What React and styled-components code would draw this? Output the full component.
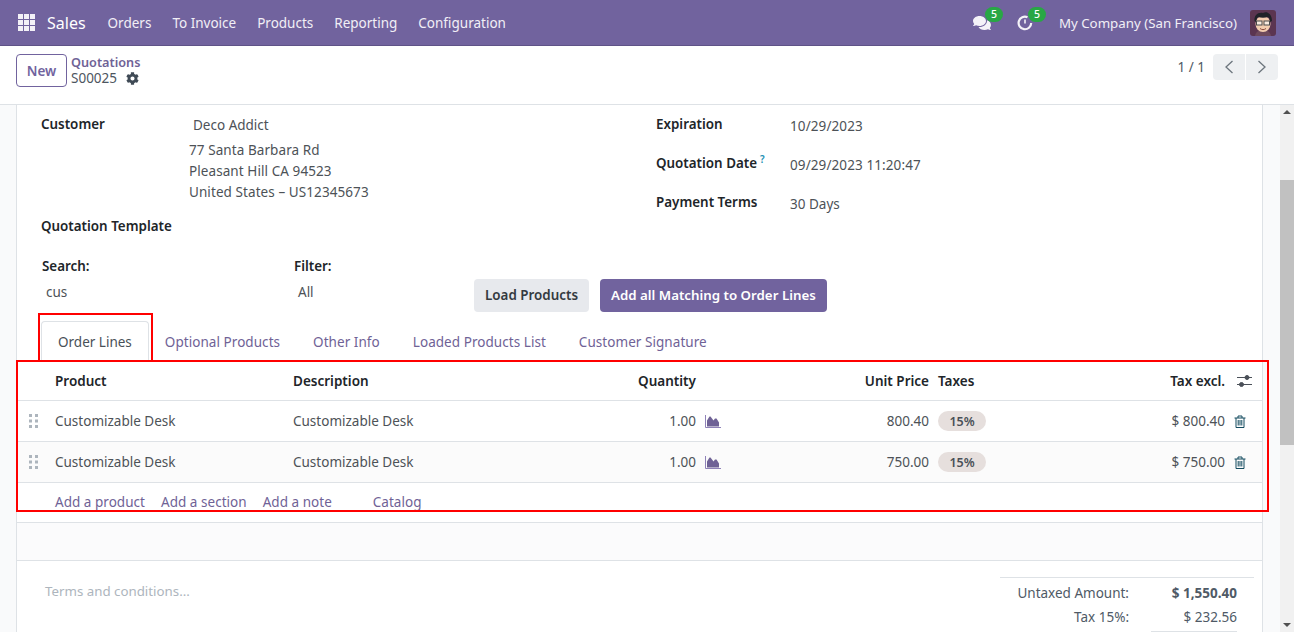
import React from "react";
import styled, { createGlobalStyle } from "styled-components";
import { FaCog, FaComments } from "react-icons/fa";

const GlobalStyle = createGlobalStyle`
html, body {
  margin: 0;
  height: 100%;
  overflow: hidden;
  font-family: "Noto Sans", "Open Sans", sans-serif;
  font-size: 13.5px;
  color: #4d5257;
  background: #fff;
}
* { box-sizing: border-box; }
`;

const purple = "#71639e";
const linkPurple = "#6f6296";
const line = "#dee2e6";
const columns = "30px 238px 283px 136px 26px 207px 110px 186px 29px";

const Shell = styled.div`
  display: flex;
  flex-direction: column;
  width: 1294px;
  height: 632px;
  overflow: hidden;
`;

const Navbar = styled.header`
  display: flex;
  align-items: center;
  flex: 0 0 46px;
  padding: 0 18px;
  background: ${purple};
  border-bottom: 1px solid #5f5387;
  color: #fff;
`;

const AppsGrid = styled.div`
  display: grid;
  grid-template-columns: repeat(3, 5px);
  grid-auto-rows: 5px;
  gap: 1px;
  margin-right: 12px;
  span { background: #f3f1f7; }
`;

const Brand = styled.span`
  font-size: 16px;
  margin-right: 22px;
`;

const Menu = styled.nav`
  display: flex;
  gap: 21px;
  color: #f1eff6;
`;

const NavRight = styled.div`
  display: flex;
  align-items: center;
  margin-left: auto;
`;

const Systray = styled.div`
  position: relative;
  width: 18px;
  height: 18px;
  margin-right: 25px;
  display: flex;
  align-items: center;
  justify-content: center;
  color: #f4f2f8;
`;

const Badge = styled.span`
  position: absolute;
  top: -7px;
  left: 12px;
  width: 18px;
  height: 15px;
  border-radius: 8px;
  background: #28a745;
  color: #fff;
  font-size: 10.5px;
  font-weight: 500;
  line-height: 15px;
  text-align: center;
`;

const Company = styled.span`
  margin-right: 13px;
  color: #f1eff6;
  font-size: 13.3px;
`;

const Avatar = styled.svg`
  width: 26px;
  height: 26px;
  border-radius: 3px;
  display: block;
`;

const ControlPanel = styled.div`
  display: flex;
  align-items: flex-start;
  flex: 0 0 59px;
  padding: 8px 16px 0;
  background: #fff;
  border-bottom: 1px solid ${line};
`;

const NewButton = styled.button`
  width: 51px;
  height: 33px;
  padding: 0;
  margin-right: 4px;
  background: #fff;
  border: 1px solid ${purple};
  border-radius: 4px;
  color: ${purple};
  font: 600 13.5px "Noto Sans", sans-serif;
`;

const Breadcrumb = styled.div`
  display: flex;
  flex-direction: column;
  line-height: 16px;
`;

const Crumb = styled.span`
  color: ${linkPurple};
  font-size: 12.7px;
  font-weight: 600;
`;

const Current = styled.span`
  display: flex;
  align-items: center;
  gap: 9px;
  color: #4d5560;
  font-size: 13.5px;
`;

const Pager = styled.div`
  display: flex;
  align-items: center;
  margin-left: auto;
  height: 26px;
`;

const PagerText = styled.span`
  margin-right: 7px;
  color: #4f5a66;
`;

const PagerButton = styled.span`
  display: flex;
  align-items: center;
  justify-content: center;
  width: 32px;
  height: 26px;
  margin-left: 1px;
  background: #eef0f2;
  border-radius: ${(p) => (p.$first ? "4px 0 0 4px" : "0 4px 4px 0")};
`;

const Body = styled.div`
  display: flex;
  flex: 1;
  min-height: 0;
  background: #f9fafb;
`;

const Gutter = styled.main`
  flex: 1;
  min-width: 0;
  overflow: hidden;
  padding: 0 17px 0 16px;
`;

const Sheet = styled.div`
  background: #fff;
  border-left: 1px solid ${line};
  border-right: 1px solid ${line};
  min-height: 100%;
`;

const FormTop = styled.div`
  display: grid;
  grid-template-columns: 615px 1fr;
  padding: 10px 0 0 24px;
`;

const FieldColumn = styled.div`
  display: flex;
  flex-direction: column;
`;

const Field = styled.div`
  display: grid;
  grid-template-columns: ${(p) => p.$label || "134px"} 1fr;
  margin-top: ${(p) => p.$above || "0"};
  margin-bottom: ${(p) => p.$gap || "0"};
`;

const Label = styled.span`
  color: #212529;
  font-weight: 600;
  line-height: 19px;
  font-size: 13.4px;
  sup {
    color: #1d8fb3;
    font-size: 10px;
    line-height: 0;
    margin-left: 3px;
  }
`;

const Value = styled.span`
  line-height: 21px;
  margin-top: ${(p) => p.$top || "0"};
  padding-left: ${(p) => p.$pad || "0"};
`;

const DateValue = styled(Value)`
  letter-spacing: 0.1px;
`;

const Address = styled.div`
  line-height: 21px;
  margin-top: 4px;
  letter-spacing: 0.08px;
`;

const FilterRow = styled.div`
  display: flex;
  align-items: flex-start;
  height: 64px;
  margin-top: 21px;
  padding-left: 25px;
`;

const FilterField = styled.div`
  display: flex;
  flex-direction: column;
  width: ${(p) => p.$w};
  gap: 7px;
`;

const FilterValue = styled.span`
  padding-left: 4px;
  line-height: 19px;
`;

const ActionButton = styled.button`
  height: 33px;
  margin: 22px 11px 0 0;
  padding: 0 11px 2px;
  border: 0;
  border-radius: 4px;
  background: ${(p) => (p.$primary ? purple : "#e7e9ed")};
  color: ${(p) => (p.$primary ? "#fff" : "#343a40")};
  font: 600 ${(p) => (p.$primary ? "13.3px" : "13.4px")} "Noto Sans", sans-serif;
`;

const Tabs = styled.div`
  display: flex;
  height: 40px;
  padding-left: 24px;
`;

const Tab = styled.span`
  position: relative;
  display: flex;
  align-items: center;
  padding: ${(p) => (p.$active ? "0 16px" : "0 16px 0 15px")};
  color: ${(p) => (p.$active ? "#495057" : linkPurple)};
  background: #fff;
  border: ${(p) => (p.$active ? `1px solid ${line}` : "1px solid transparent")};
  border-bottom: 0;
  border-radius: 4px 4px 0 0;
  letter-spacing: ${(p) => (p.$active ? "0" : "0.05px")};
`;

const Marker = styled.div`
  position: absolute;
  inset: ${(p) => p.$inset};
  border: 2px solid #f00;
  pointer-events: none;
  z-index: 1;
`;

const Table = styled.div`
  position: relative;
`;

const Row = styled.div`
  display: grid;
  grid-template-columns: ${columns};
  align-items: center;
  height: ${(p) => p.$h || "40px"};
  border-bottom: 1px solid ${line};
  background: ${(p) => (p.$alt ? "#fbfbfb" : "#fff")};
`;

const Cell = styled.div`
  padding: ${(p) => (p.$flush ? "0 8px 0 1px" : "0 8px")};
  white-space: nowrap;
  font-weight: ${(p) => (p.$head ? 600 : 400)};
  color: ${(p) => (p.$head ? "#212529" : "#4d5257")};
  text-align: ${(p) => (p.$right ? "right" : "left")};
`;

const Handle = styled.svg`
  display: block;
  margin-left: 12px;
  width: 9px;
  height: 14px;
  fill: #adb5bd;
`;

const TaxTag = styled.span`
  display: inline-block;
  width: 48px;
  height: 20px;
  border-radius: 10px;
  background: #e6dfdd;
  color: #495057;
  font-size: 12.5px;
  font-weight: 600;
  line-height: 21px;
  text-align: center;
`;

const ChartIcon = styled.svg`
  display: block;
  width: 16px;
  height: 13px;
  margin-left: 1px;
`;

const TrashIcon = styled.svg`
  display: block;
  width: 12px;
  height: 13px;
  margin-left: 1px;
  fill: none;
  stroke: #124a5e;
`;

const SettingsIcon = styled.svg`
  display: block;
  width: 16px;
  height: 14px;
  margin-left: 4px;
`;

const AddLine = styled.div`
  display: flex;
  align-items: center;
  height: 40px;
  padding-left: 38px;
  padding-bottom: 1px;
  border-bottom: 1px solid ${line};
  color: ${linkPurple};
  letter-spacing: 0.03px;
`;

const AddLink = styled.span`
  margin-right: ${(p) => p.$gap || "16px"};
`;

const Band = styled.div`
  height: 38px;
  background: #fbfbfc;
  border-bottom: 1px solid ${line};
`;

const Footer = styled.div`
  display: flex;
  justify-content: space-between;
  padding: 16px 8px 0 28px;
`;

const Terms = styled.span`
  margin-top: 5px;
  color: #adb5bd;
  font-size: 13.3px;
`;

const Totals = styled.div`
  width: 254px;
  padding-top: 3px;
  border-top: 1px solid ${line};
`;

const TotalRow = styled.div`
  display: grid;
  grid-template-columns: 129px 108px;
  line-height: 24px;
  text-align: right;
  color: #4f5a66;
`;

const Strong = styled.span`
  font-weight: 700;
`;

const TotalRule = styled.div`
  width: 86px;
  margin: 2px 0 0 151px;
  border-top: 1px solid ${line};
`;

const Scrollbar = styled.div`
  display: flex;
  flex-direction: column;
  flex: 0 0 14px;
  background: #f1f1f1;
`;

const Arrow = styled.div`
  display: flex;
  align-items: center;
  justify-content: center;
  height: 14px;
  &::before {
    content: "";
    border-left: 4px solid transparent;
    border-right: 4px solid transparent;
    ${(p) => (p.$down ? "border-top: 4px solid #505050;" : "border-bottom: 4px solid #505050;")}
  }
`;

const Track = styled.div`
  flex: 1;
`;

const Thumb = styled.div`
  height: 265px;
  margin-top: 61px;
  background: #c1c1c1;
`;

function OrderRow({ alt, price, total }) {
  return (
    <Row $alt={alt} $h="41px">
      <Handle viewBox="0 0 9 14">
        {[0, 5.5, 11].flatMap((y) => [0, 6].map((x) => <rect key={`${x}-${y}`} x={x} y={y} width="3" height="3" />))}
      </Handle>
      <Cell>Customizable Desk</Cell>
      <Cell>Customizable Desk</Cell>
      <Cell $right>1.00</Cell>
      <ChartIcon viewBox="0 0 16 13">
        <path d="M.5 0v12.500H16" fill="none" stroke="#8f82b8" />
        <path d="M2 11.500V5.500l2.500-4h1l3 4 1.500-2h1.500l2.500 4v4z" fill={linkPurple} />
      </ChartIcon>
      <Cell $right>{price}</Cell>
      <Cell $flush><TaxTag>15%</TaxTag></Cell>
      <Cell $right>{total}</Cell>
      <TrashIcon viewBox="0 0 12 13">
        <path d="M.5 3h11M4 3V1h4v2M2 3v9.500h8V3M4.200 5v5.500M6 5v5.500M7.800 5v5.500" />
      </TrashIcon>
    </Row>
  );
}

export default function App() {
  return (
    <Shell>
      <GlobalStyle />
      <Navbar>
        <AppsGrid>
          {Array.from({ length: 9 }, (_, i) => <span key={i} />)}
        </AppsGrid>
        <Brand>Sales</Brand>
        <Menu>
          <span>Orders</span>
          <span>To Invoice</span>
          <span>Products</span>
          <span>Reporting</span>
          <span>Configuration</span>
        </Menu>
        <NavRight>
          <Systray>
            <FaComments size={18} />
            <Badge>5</Badge>
          </Systray>
          <Systray>
            <svg width="16" height="16" viewBox="0 0 16 16" fill="none" stroke="currentColor">
              <path d="M10.500 2.200A6.300 6.300 0 1 0 14.200 8" strokeWidth="2.200" />
              <path d="M8 4.500V8.500" strokeWidth="1.600" />
            </svg>
            <Badge>5</Badge>
          </Systray>
          <Company>My Company (San Francisco)</Company>
          <Avatar viewBox="0 0 26 26">
            <rect width="26" height="26" fill="#5b3550" />
            <path d="M5 26c1-5 4-6 8-6s7 1 8 6z" fill="#6e4a5c" />
            <ellipse cx="13" cy="14" rx="7.500" ry="8" fill="#f3cdb0" />
            <path d="M4.500 11C4 5 8 2 13 3c3-2 9 0 9 8l-2 1c0-3-1-4-2-5-3 1-7 1-10 0-1 1-2 3-2 5z" fill="#1f2228" />
            <rect x="6.500" y="11" width="5.500" height="4" fill="#fff" fillOpacity=".6" stroke="#4a4a4a" />
            <rect x="14" y="11" width="5.500" height="4" fill="#fff" fillOpacity=".6" stroke="#4a4a4a" />
            <path d="M10 18.500c2 1.500 4 1.500 6 0" fill="none" stroke="#8c4b3c" />
          </Avatar>
        </NavRight>
      </Navbar>

      <ControlPanel>
        <NewButton>New</NewButton>
        <Breadcrumb>
          <Crumb>Quotations</Crumb>
          <Current>
            S00025
            <FaCog size={13} color="#3f4a55" />
          </Current>
        </Breadcrumb>
        <Pager>
          <PagerText>1 / 1</PagerText>
          <PagerButton $first>
            <svg width="10" height="16" viewBox="0 0 10 16" fill="none" stroke="#6c757d" strokeWidth="1.300">
              <path d="M8.500 2 2 8l6.500 6" />
            </svg>
          </PagerButton>
          <PagerButton>
            <svg width="10" height="16" viewBox="0 0 10 16" fill="none" stroke="#6c757d" strokeWidth="1.300">
              <path d="M1.500 2 8 8l-6.500 6" />
            </svg>
          </PagerButton>
        </Pager>
      </ControlPanel>

      <Body>
        <Gutter>
          <Sheet>
            <FormTop>
              <FieldColumn>
                <Field $label="148px">
                  <Label>Customer</Label>
                  <div>
                    <Value $pad="4px">Deco Addict</Value>
                    <Address>
                      77 Santa Barbara Rd<br />
                      Pleasant Hill CA 94523<br />
                      United States – US12345673
                    </Address>
                  </div>
                </Field>
                <Field $above="14px">
                  <Label>Quotation Template</Label>
                </Field>
              </FieldColumn>
              <FieldColumn>
                <Field $gap="17px">
                  <Label>Expiration</Label>
                  <DateValue $top="1px">10/29/2023</DateValue>
                </Field>
                <Field $gap="17px">
                  <Label>Quotation Date<sup>?</sup></Label>
                  <DateValue $top="1px">09/29/2023 11:20:47</DateValue>
                </Field>
                <Field>
                  <Label>Payment Terms</Label>
                  <Value $top="1px">30 Days</Value>
                </Field>
              </FieldColumn>
            </FormTop>

            <FilterRow>
              <FilterField $w="252px">
                <Label>Search:</Label>
                <FilterValue>cus</FilterValue>
              </FilterField>
              <FilterField $w="180px">
                <Label>Filter:</Label>
                <FilterValue>All</FilterValue>
              </FilterField>
              <ActionButton>Load Products</ActionButton>
              <ActionButton $primary>Add all Matching to Order Lines</ActionButton>
            </FilterRow>

            <Tabs>
              <Tab $active>
                Order Lines
                <Marker $inset="-9px -5px -1px -4px" />
              </Tab>
              <Tab>Optional Products</Tab>
              <Tab>Other Info</Tab>
              <Tab>Loaded Products List</Tab>
              <Tab>Customer Signature</Tab>
            </Tabs>

            <Table>
              <Marker $inset="-1px -7px 11px -1px" />
              <Row $h="40px">
                <span />
                <Cell $head>Product</Cell>
                <Cell $head>Description</Cell>
                <Cell $head $right>Quantity</Cell>
                <span />
                <Cell $head $right>Unit Price</Cell>
                <Cell $head $flush>Taxes</Cell>
                <Cell $head $right>Tax excl.</Cell>
                <SettingsIcon viewBox="0 0 16 14" fill="none" stroke="#4a5058">
                  <path d="M0 3.500h15M0 10.500h15" />
                  <circle cx="10" cy="3.500" r="2" fill="#4a5058" />
                  <circle cx="4.500" cy="10.500" r="2" fill="#4a5058" />
                </SettingsIcon>
              </Row>
              <OrderRow price="800.40" total="$ 800.40" />
              <OrderRow alt price="750.00" total="$ 750.00" />
              <AddLine>
                <AddLink>Add a product</AddLink>
                <AddLink>Add a section</AddLink>
                <AddLink $gap="41px">Add a note</AddLink>
                <AddLink>Catalog</AddLink>
              </AddLine>
            </Table>

            <Band />

            <Footer>
              <Terms>Terms and conditions...</Terms>
              <Totals>
                <TotalRow>
                  <span>Untaxed Amount:</span>
                  <Strong>$ 1,550.40</Strong>
                </TotalRow>
                <TotalRow>
                  <span>Tax 15%:</span>
                  <span>$ 232.56</span>
                </TotalRow>
                <TotalRule />
              </Totals>
            </Footer>
          </Sheet>
        </Gutter>
        <Scrollbar>
          <Arrow />
          <Track>
            <Thumb />
          </Track>
          <Arrow $down />
        </Scrollbar>
      </Body>
    </Shell>
  );
}
